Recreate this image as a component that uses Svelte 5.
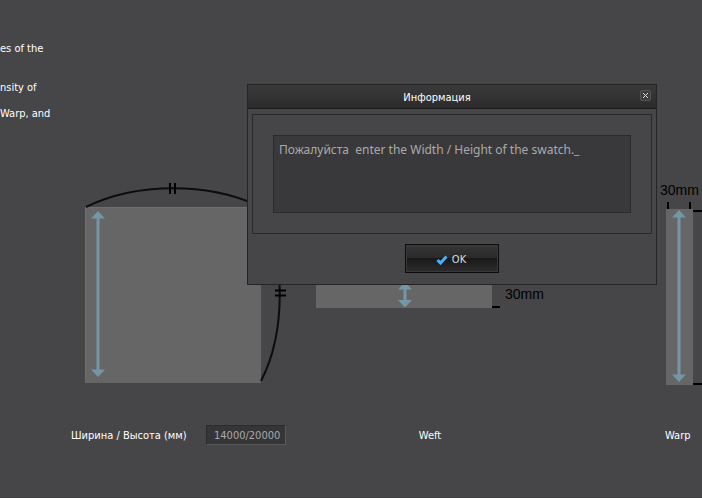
<script>
  let open = $state(true);
  let size = $state('14000/20000');

  const notes = [
    { text: 'es of the', gap: false },
    { text: 'nsity of', gap: true },
    { text: 'Warp, and', gap: false },
  ];
</script>

<main>
  <section class="notes">
    {#each notes as note}
      <p class:gap={note.gap}>{note.text}</p>
    {/each}
  </section>

  <section class="swatches">
    <figure class="full">
      <svg width="220" height="220" viewBox="0 0 220 220" aria-hidden="true">
        <rect x="14" y="27" width="176" height="176" fill="#666" />
        <path d="M14.500 203V27.500H190" fill="none" stroke="#6e6e6e" />
        <path d="M15 27C66 2 138 2 190 27" fill="none" stroke="#0c0c0c" stroke-width="2" />
        <path d="M190 201C215 153 215 75 190 27" fill="none" stroke="#0c0c0c" stroke-width="2" />
        <path d="M99 3v11M104 3v11M204 110.500h11M204 115.500h11" stroke="#000" stroke-width="2" />
        <path d="M27 31l7 7.500h-5.500v151h5.500l-7 7.500l-7-7.500h5.500v-151h-5.500z" fill="#7496a6" />
      </svg>
      <figcaption class="field">
        <label for="size">Ширина / Высота (мм)</label>
        <input id="size" type="text" bind:value={size} />
      </figcaption>
    </figure>

    <figure class="weft">
      <svg width="228" height="220" viewBox="0 0 228 220" aria-hidden="true">
        <rect x="0" y="98" width="176" height="30" fill="#666" />
        <path d="M176 127h8M176 99h8" stroke="#000" stroke-width="2" />
        <path d="M89 102l7 7.500h-5.500v10.500h5.500l-7 7.500l-7-7.500h5.500v-10.500h-5.500z" fill="#7496a6" />
        <text x="189" y="119">30mm</text>
      </svg>
      <figcaption>Weft</figcaption>
    </figure>

    <figure class="warp">
      <svg width="84" height="220" viewBox="0 0 84 220" aria-hidden="true">
        <rect x="6" y="29" width="27" height="176" fill="#666" />
        <path d="M8 22v7M30 22v7M33 31h16M33 204h16" stroke="#000" stroke-width="2" />
        <path d="M19 30l7 7.500h-5.500v157h5.500l-7 7.500l-7-7.500h5.500v-157h-5.500z" fill="#7496a6" />
        <text x="0" y="15">30mm</text>
      </svg>
      <figcaption>Warp</figcaption>
    </figure>
  </section>

  {#if open}
    <div class="dialog" role="dialog" aria-labelledby="dialog-title">
      <header>
        <h2 id="dialog-title">Информация</h2>
        <button class="close" aria-label="Close" onclick={() => (open = false)}>
          <svg width="7" height="7" viewBox="0 0 7 7">
            <path d="M1 1l5 5M6 1l-5 5" stroke="#ddd" />
          </svg>
        </button>
      </header>
      <div class="content">
        <p class="message">Пожалуйста&nbsp; enter the Width / Height of the swatch._</p>
      </div>
      <footer>
        <button class="ok" onclick={() => (open = false)}>
          <svg width="12" height="10" viewBox="0 0 12 10" aria-hidden="true">
            <path d="M1.500 5l3 3L10.500 1.500" fill="none" stroke="#4bb0fa" stroke-width="3" />
          </svg>
          OK
        </button>
      </footer>
    </div>
  {/if}
</main>

<style>
  :global(body) {
    margin: 0;
    background: #464648;
  }

  main {
    position: relative;
    box-sizing: border-box;
    min-height: 100vh;
    padding-top: 42px;
    overflow: hidden;
    border-bottom: 1px solid #3e3e40;
    font-family: Tahoma, "DejaVu Sans Condensed", "DejaVu Sans", sans-serif;
    font-size: 11px;
    line-height: 13px;
    color: #fff;
  }

  p,
  h2,
  figure {
    margin: 0;
  }

  .notes .gap {
    margin: 26px 0 13px;
  }

  .swatches {
    display: flex;
    align-items: flex-start;
    margin-top: 60px;
    padding-left: 71px;
  }

  figure {
    flex: none;
  }

  figure svg {
    display: block;
  }

  figure text {
    font: 14px "Liberation Sans", Arial, sans-serif;
    fill: #000;
  }

  figcaption {
    display: flex;
    align-items: center;
    height: 20px;
    margin-top: 25px;
  }

  .full {
    width: 245px;
  }

  .weft {
    width: 228px;
    margin-right: 116px;
  }

  .weft figcaption {
    justify-content: center;
  }

  .warp figcaption {
    padding-left: 5px;
  }

  .field {
    justify-content: space-between;
    width: 215px;
  }

  .field input {
    box-sizing: border-box;
    width: 80px;
    height: 20px;
    padding: 0 1px 0 7px;
    border: 1px solid #2c2c2e;
    border-right-color: #5a5a5c;
    border-bottom-color: #5a5a5c;
    background: #353537;
    color: #aaa;
    font: inherit;
  }

  .dialog {
    position: absolute;
    top: 84px;
    left: 247px;
    box-sizing: border-box;
    width: 410px;
    border: 1px solid #242426;
    background: #464648;
  }

  header {
    position: relative;
    height: 23px;
    padding-right: 30px;
    border-bottom: 1px solid #19191a;
    background: linear-gradient(#3a3a3b, #2b2b2c);
  }

  h2 {
    font-size: 11px;
    font-weight: normal;
    line-height: 26px;
    text-align: center;
  }

  .close {
    position: absolute;
    top: 5px;
    right: 5px;
    display: flex;
    align-items: center;
    justify-content: center;
    width: 11px;
    height: 11px;
    padding: 0;
    border: 1px solid #555;
    border-radius: 2px;
    background: #3c3c3d;
  }

  .close svg {
    flex: none;
  }

  .content {
    margin: 5px 4px 0;
    padding: 20px;
    border: 1px solid #29292b;
  }

  .message {
    box-sizing: border-box;
    min-height: 78px;
    padding: 6px 5px;
    border: 1px solid #2b2b2d;
    background: #39393b;
    color: #aaa;
    font-family: Tahoma, "Noto Sans", sans-serif;
    font-size: 12px;
    line-height: 16px;
  }

  footer {
    display: flex;
    justify-content: center;
    padding: 10px 0 11px;
  }

  .ok {
    display: flex;
    align-items: center;
    justify-content: center;
    gap: 4px;
    box-sizing: border-box;
    width: 94px;
    height: 29px;
    padding: 2px 2px 0 0;
    border: 1px solid #0c0c0d;
    background: linear-gradient(#363637, #29292a 50%, #19191a 50%, #2c2c2d);
    box-shadow: inset 0 0 0 1px #3a3a3b;
    color: #ddd;
    font: inherit;
  }
</style>
